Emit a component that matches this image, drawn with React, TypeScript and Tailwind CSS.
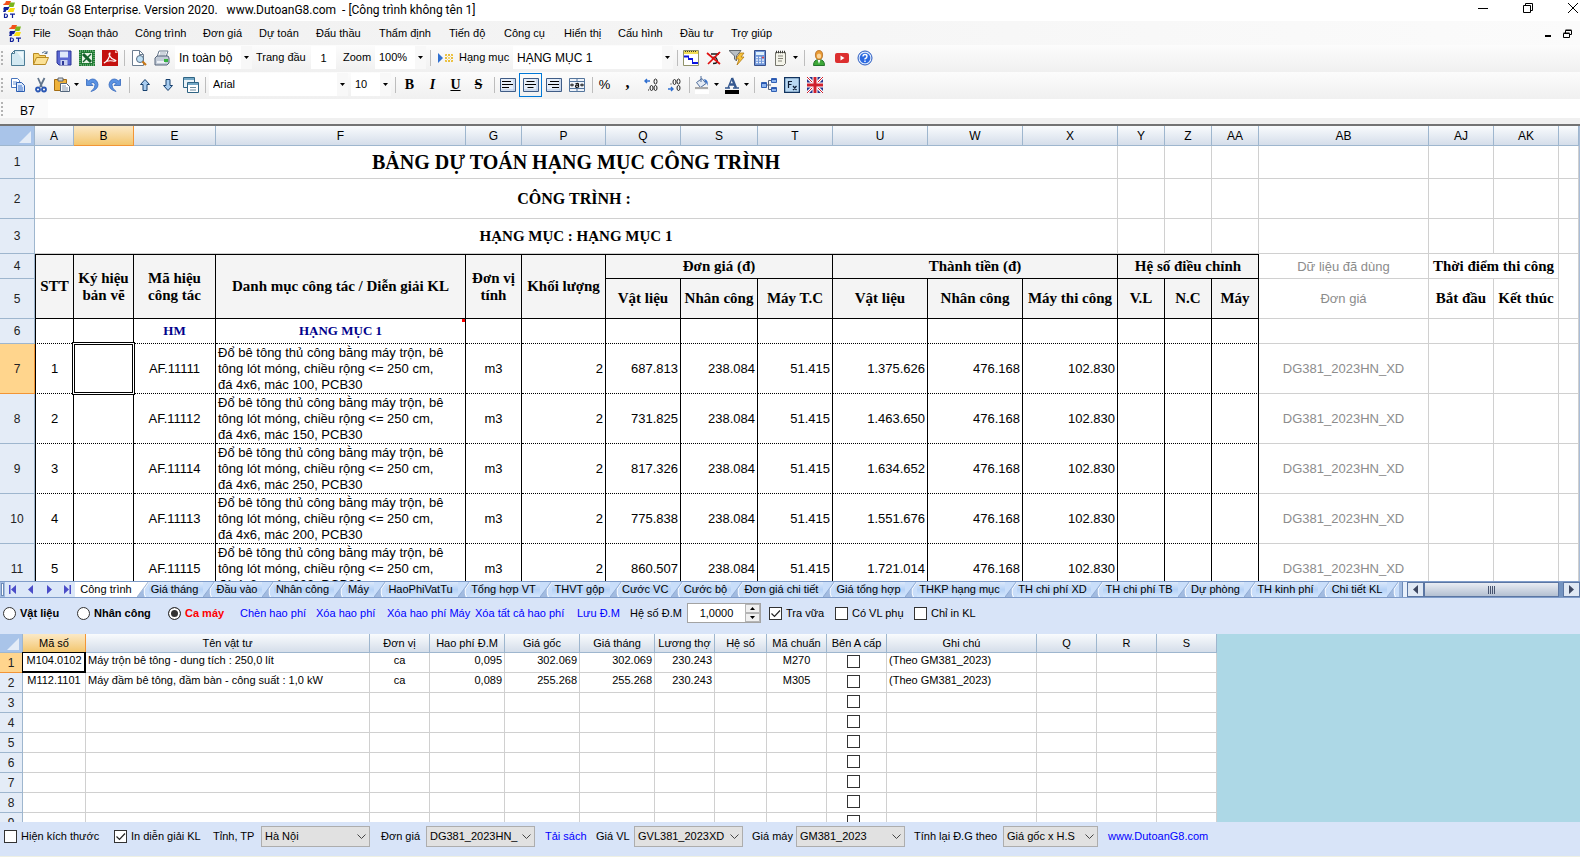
import React from 'react';

const UI = "font-['Liberation_Sans',Arial,sans-serif]";
const SERIF = "font-['Liberation_Serif','Times_New_Roman',serif]";

/* ---------- icons ---------- */

type IconProps = { children: React.ReactNode; size?: string; box?: string };
const Svg = ({ children, size = 'size-4', box = '0 0 16 16' }: IconProps) => (
  <svg viewBox={box} className={`${size} shrink-0`} aria-hidden="true">
    {children}
  </svg>
);

const Logo = () => (
  <Svg box="0 0 14 17" size="w-[14px] h-[17px]">
    <path d="M4 0h5L7.500 4H1l1-1.500h1z" fill="#f4511a" />
    <path d="M8 1.500h5L11.500 6H6.500z" fill="#7ab51d" />
    <path d="M2 6h5.500L6 9H4.500L3.500 11H1l1-2.500h-1z" fill="#10209a" />
    <path d="M8 7h5l-1.500 4h-6z" fill="#fbdf10" />
    <path d="M2.500 13v3.500h1.200q1.800 0 1.800-1.700T3.700 13zM8 13.200h5M10.500 13v4" fill="none" stroke="#10209a" strokeWidth="1.200" />
  </Svg>
);
const NewIcon = () => (
  <Svg>
    <path d="M4.500.500h10v15h-13v-12z" fill="#d3e9f2" stroke="#4d7d96" />
    <path d="M4.500.500v3h-3z" fill="#fff" stroke="#4d7d96" />
    <path d="M7 2h6v8z" fill="#eef8fc" />
  </Svg>
);
const OpenIcon = () => (
  <Svg>
    <path d="M.500 14.500v-11h5l1 2h6v3" fill="#f6d36b" stroke="#b88a22" />
    <path d="M.500 14.500l3-7h12l-3 7z" fill="#fbe196" stroke="#b88a22" />
    <path d="M9 3q3-3 5 0m0-2v2.500h-2.500" fill="none" stroke="#55708c" />
  </Svg>
);
const SaveIcon = () => (
  <Svg>
    <path d="M1 1h14v14H3l-2-2z" fill="#5a67d2" stroke="#2d3796" />
    <path d="M4 1.500h8v6H4z" fill="#dfe8fb" />
    <path d="M4.500 10h7v5h-7z" fill="#c9d2f0" />
    <path d="M6 11h2v4H6z" fill="#2d3796" />
  </Svg>
);
const ExcelIcon = () => (
  <Svg>
    <path d="M0 0h16v16H0z" fill="#1f7a33" />
    <path d="M1 1h14v14H1z" fill="none" stroke="#9fd2a4" strokeDasharray="1 1" />
    <path d="M3 3h10v10H3z" fill="#e8f4e6" />
    <path d="M4 4l8 8" stroke="#14602a" strokeWidth="3" />
    <path d="M12 4l-8 8" stroke="#14602a" strokeWidth="1.500" />
  </Svg>
);
const PdfIcon = () => (
  <Svg>
    <path d="M0 0h14l2 2v14H0z" fill="#c4120f" />
    <path d="M13 0l3 3h-3z" fill="#f7b4ae" />
    <path d="M2 13c3-1 6-6 6-10-2 0-1 5 5 7 2 .500 0 1.500-2 1-3-.500-7 0-9 2z" fill="none" stroke="#fff" strokeWidth="1.200" />
  </Svg>
);
const PreviewIcon = () => (
  <Svg>
    <path d="M1.500.500h7l4 4v11h-11z" fill="#fff" stroke="#6c7d90" />
    <path d="M8.500.500v4h4" fill="none" stroke="#6c7d90" />
    <circle cx="9" cy="9" r="3.500" fill="#bfe0f5" stroke="#566a80" />
    <path d="M11.500 11.500l3.500 3.500" stroke="#c87818" strokeWidth="2.200" />
  </Svg>
);
const PrintIcon = () => (
  <Svg>
    <path d="M5 1h9l-2 6H3z" fill="#fff" stroke="#67788c" />
    <path d="M6 3h6M5.500 5h6" stroke="#9cabbb" />
    <path d="M1 8l2-2h11l1 2v5l-2 2H1z" fill="#c3ccd8" stroke="#56657a" />
    <path d="M3 11h8v2H3z" fill="#eef2f7" />
    <path d="M10 9h4v3h-4z" fill="#35b13f" />
  </Svg>
);
const InsertItemIcon = () => (
  <Svg>
    <path d="M1 3v10l5-5z" fill="#2f6fd0" />
    <path d="M8 4h2v2H8zM11 4h2v2h-2zM14 4h2v2h-2zM8 7h2v2H8zM14 7h2v2h-2zM8 10h2v2H8zM11 10h2v2h-2zM14 10h2v2h-2z" fill="#e9bd3a" />
    <path d="M11 7h2v2h-2z" fill="#fbe79a" />
    <path d="M8 4l8 8M16 4l-8 8" stroke="#f0cf62" strokeWidth=".700" />
  </Svg>
);
const GanttIcon = () => (
  <Svg>
    <path d="M.500.500h15v15H.500z" fill="#fff" stroke="#90926a" />
    <path d="M1 1h14v3H1z" fill="#f2dd55" />
    <path d="M2 1.500h12" stroke="#3c3c28" strokeDasharray="1 1" />
    <path d="M1 6.500h5M5 9h5M9 13h6" stroke="#0a14e0" strokeWidth="2" />
    <path d="M5.500 6v3M9.500 9v4" stroke="#0a14e0" />
  </Svg>
);
const DeleteIcon = () => (
  <Svg>
    <path d="M5 4h8M6 8.500q3-3 5 1t-4 4M10 5l3-2" stroke="#1a1a1a" strokeWidth="1.300" fill="none" />
    <path d="M1 3l13 11M14 2L2 14" stroke="#e01010" strokeWidth="1.700" />
  </Svg>
);
const FilterIcon = () => (
  <Svg>
    <path d="M0 .500h12L7.500 6v5l-2-2V6z" fill="#b9bfc5" stroke="#62686e" />
    <path d="M11 3h4l-3 4h3l-7 8 2-6H7z" fill="#f8c43a" stroke="#b07814" strokeWidth=".800" />
  </Svg>
);
const CalcIcon = () => (
  <Svg>
    <path d="M2.500.500h11v15h-11z" fill="#6f96d8" stroke="#37508c" />
    <path d="M4 2h8v3H4z" fill="#dff0fb" />
    <path d="M4 7.500h8M4 10h8M4 12.500h8" stroke="#e7effc" strokeWidth="1.500" strokeDasharray="2 1" />
    <path d="M10 7.500h2" stroke="#e04040" strokeWidth="1.500" />
  </Svg>
);
const NoteIcon = () => (
  <Svg>
    <path d="M2.500 2.500h10v11l-2 2h-8z" fill="#f4f4ea" stroke="#75756c" />
    <path d="M3 2h10" stroke="#3a3a36" strokeWidth="2.500" strokeDasharray="1 1" />
    <path d="M5 6h5M5 8.500h5M5 11h4" stroke="#85857a" />
  </Svg>
);
const UserIcon = () => (
  <Svg>
    <path d="M2.500 15.500q0-6 5.500-6t5.500 6z" fill="#3da838" stroke="#23742a" />
    <path d="M6.500 9.500h3L8 14z" fill="#fff" />
    <ellipse cx="8" cy="5" rx="3.600" ry="4.500" fill="#e99a34" stroke="#a8621a" strokeWidth=".700" />
    <ellipse cx="8" cy="6" rx="2.200" ry="2.600" fill="#fbd59a" />
  </Svg>
);
const VideoIcon = () => (
  <Svg>
    <rect x="1" y="3" width="14" height="10" rx="2" fill="#dc2f2f" />
    <path d="M6.500 5.500v5l4-2.500z" fill="#fff" />
  </Svg>
);
const HelpIcon = () => (
  <Svg>
    <circle cx="8" cy="8" r="7" fill="#dbe9fd" stroke="#2a5ac0" />
    <circle cx="8" cy="8" r="5.300" fill="#2d6ae0" />
    <path d="M6 6.500q0-2 2-2t2 1.700-2 2.600v.700M8 10.500V12" stroke="#fff" strokeWidth="1.400" fill="none" />
  </Svg>
);
const CopyIcon = () => (
  <Svg>
    <path d="M1.500 1.500h6l2 2v7h-8z" fill="#fff" stroke="#4775bd" />
    <path d="M3 5h4M3 7h4" stroke="#6d96d6" />
    <path d="M6.500 5.500h5l3 3v6h-8z" fill="#dce9fb" stroke="#2a5cb0" />
    <path d="M8 9h4M8 11h5M8 13h5" stroke="#3d73cc" />
  </Svg>
);
const CutIcon = () => (
  <Svg>
    <path d="M5 1l4 9M11.500 1L7 10" stroke="#62758c" strokeWidth="1.800" />
    <circle cx="5" cy="12.500" r="2" fill="none" stroke="#2a57b4" strokeWidth="1.800" />
    <circle cx="11" cy="12.500" r="2" fill="none" stroke="#2a57b4" strokeWidth="1.800" />
  </Svg>
);
const PasteIcon = () => (
  <Svg>
    <path d="M.500 2.500h12v11H.500z" fill="#efb33b" stroke="#a46d14" />
    <path d="M4 1h5v3H4z" fill="#d7dbe0" stroke="#5e6670" />
    <path d="M6.500 6.500h6l3 3v5h-9z" fill="#fff" stroke="#53667c" />
    <path d="M8 9h4M8 11h6M8 13h6" stroke="#8a9bb0" />
  </Svg>
);
const UndoIcon = ({ flip = false }: { flip?: boolean }) => (
  <Svg>
    <g transform={flip ? undefined : 'translate(16 0) scale(-1 1)'}>
      <path d="M13.500 2v6.500H7l2.200-2.200Q6 4.500 5 7.500q-.500 3.500 4 7Q2 12.500 2 7.500 3 2 7.500 2q2 0 4 2z" fill="#5a92e2" stroke="#3568bd" strokeWidth=".800" />
    </g>
  </Svg>
);
const ArrowIcon = ({ down = false }: { down?: boolean }) => (
  <Svg>
    <g transform={down ? 'translate(0 16) scale(1 -1)' : undefined}>
      <path d="M8 2.500l4.500 5H10v6H6v-6H3.500z" fill="#a9cdf0" stroke="#17406e" />
    </g>
  </Svg>
);
const SheetsIcon = () => (
  <Svg>
    <path d="M.500.500h11v10h-11z" fill="#eaf3f8" stroke="#2f6484" />
    <path d="M1 2h10" stroke="#74a8c6" strokeWidth="2" />
    <path d="M4.500 5.500h11v10h-11z" fill="#fff" stroke="#2f6484" />
    <path d="M5 7h10" stroke="#74a8c6" strokeWidth="2" />
    <path d="M7 10.500h6M7 13h6" stroke="#6b8ba0" />
  </Svg>
);
const AlignIcon = ({ d }: { d: string }) => (
  <Svg>
    <path d="M.500 1.500h15v13H.500z" fill="#e6eef9" stroke="#3f5c86" />
    <path d="M1 13h14M14 2v12" stroke="#b3c6e2" />
    <path d={d} stroke="#000" />
  </Svg>
);
const MergeIcon = () => (
  <Svg>
    <path d="M.500 1.500h15v13H.500z" fill="#eef3fa" stroke="#54759c" />
    <path d="M.500 4.500h15M.500 11.500h15M8 1.500v3M8 11.500v3" stroke="#54759c" />
    <path d="M1 8h4M11 8h4M3 6.500v3M13 6.500v3" stroke="#111" />
    <path d="M6.500 7q3-1.500 3 .500v2.500q-3 1-3-.700t3-.800" stroke="#111" fill="none" strokeWidth="1.200" />
  </Svg>
);
const DecimalIcon = ({ less = false }: { less?: boolean }) => (
  <Svg>
    <path d={less ? 'M2 12h5M5 10l2 2-2 2' : 'M2 4h5M4 2L2 4l2 2'} stroke="#2f6fd0" fill="none" strokeWidth="1.400" />
    <ellipse cx="8.500" cy={less ? 5 : 11} rx="1.500" ry="2.500" fill="none" stroke="#222" />
    <ellipse cx="12.500" cy="4.500" rx="1.500" ry="2.500" fill="none" stroke="#222" />
    <ellipse cx="12.500" cy="11" rx="1.500" ry="2.500" fill="none" stroke="#222" />
    <path d={less ? 'M4.500 7h1' : 'M5 13h1'} stroke="#222" />
  </Svg>
);
const FillIcon = () => (
  <Svg box="0 0 16 18" size="w-4 h-[18px]">
    <path d="M2.500 6.500l5.500-4 4 5-5.500 4z" fill="#e4ebf5" stroke="#4f6d9b" />
    <path d="M7 0v6" stroke="#4f6d9b" />
    <path d="M10 3q5 1 3.500 7-1-4-2.500-4z" fill="#3a72c8" />
    <path d="M1 12h13" stroke="#a9a9a9" strokeWidth="2" />
    <path d="M1 14h14v4H1z" fill="#fff" />
  </Svg>
);
const FontColorIcon = () => (
  <Svg box="0 0 16 18" size="w-4 h-[18px]">
    <path d="M1 12h5M9 12h6M4 12L8 2" stroke="#35588f" strokeWidth="1.400" fill="none" />
    <path d="M8 2l4 10M5.500 8.500H11" stroke="#35588f" strokeWidth="2.400" fill="none" />
    <path d="M1 14h14v4H1z" fill="#000" />
  </Svg>
);
const TreeIcon = () => (
  <Svg>
    <path d="M5 8h5M7.500 3.500v9H11M7.500 3.500H11" stroke="#555f78" fill="none" />
    <path d="M.500 5.500h5v5h-5zM10.500 1.500h5v4h-5zM10.500 10.500h5v4h-5z" fill="#8db4ee" stroke="#3060b4" />
    <path d="M1 6.500h4M11 2.500h4M11 11.500h4" stroke="#2b56b0" />
  </Svg>
);
const FxIcon = () => (
  <Svg>
    <path d="M.500.500h15v15H.500z" fill="#b8d8f2" stroke="#12345f" strokeWidth="1.500" />
    <path d="M4.500 11V4.500H8M4.500 7.500H7.500M9 9l3.500 4M12.500 9L9 13" stroke="#0c1c34" strokeWidth="1.200" fill="none" />
  </Svg>
);
const FlagIcon = () => (
  <Svg>
    <path d="M0 0h16v16H0z" fill="#26358c" />
    <path d="M0 0l16 16M16 0L0 16" stroke="#fff" strokeWidth="3" />
    <path d="M0 0l16 16M16 0L0 16" stroke="#d0202c" strokeWidth="1" />
    <path d="M8 0v16M0 8h16" stroke="#fff" strokeWidth="5" />
    <path d="M8 0v16M0 8h16" stroke="#d0202c" strokeWidth="3" />
  </Svg>
);
const Caret = () => (
  <Svg box="0 0 5 3" size="w-[5px] h-[3px]">
    <path d="M0 0h5L2.500 3z" fill="#000" />
  </Svg>
);

/* ---------- toolbar parts ---------- */

const Tool = ({ label, children, w = 'w-[23px]' }: { label: string; children: React.ReactNode; w?: string }) => (
  <button type="button" aria-label={label} className={`flex h-6 ${w} shrink-0 items-center justify-center gap-1`}>
    {children}
  </button>
);
const Sep = ({ m = 'mx-1' }: { m?: string }) => <span className={`h-4 w-px shrink-0 bg-[#bdbdbd] ${m}`} />;
const Grip = () => (
  <span className="flex w-[5px] shrink-0 flex-col gap-[2px]">
    {[0, 1, 2, 3].map((i) => (
      <span key={i} className="size-[2px] bg-[#b4b4b4]" />
    ))}
  </span>
);
const Combo = ({ label, value, w, text = 'text-[11px]' }: { label: string; value: string; w: string; text?: string }) => (
  <span className={`relative flex h-[23px] shrink-0 items-center bg-white ${w}`}>
    <select aria-label={label} className={`h-full w-full appearance-none bg-transparent pl-1 outline-none ${text}`}>
      <option>{value}</option>
    </select>
    <span className="pointer-events-none absolute inset-y-0 right-0 flex w-[11px] items-center justify-center bg-[#f8f8f8]">
      <Caret />
    </span>
  </span>
);

const MENU: [string, string][] = [
  ['File', 'w-[35px]'],
  ['Soạn thảo', 'w-[67px]'],
  ['Công trình', 'w-[68px]'],
  ['Đơn giá', 'w-14'],
  ['Dự toán', 'w-[57px]'],
  ['Đấu thầu', 'w-[63px]'],
  ['Thẩm định', 'w-[70px]'],
  ['Tiến độ', 'w-[55px]'],
  ['Công cụ', 'w-[60px]'],
  ['Hiển thị', 'w-[54px]'],
  ['Cấu hình', 'w-[62px]'],
  ['Đầu tư', 'w-[51px]'],
  ['Trợ giúp', 'w-[58px]'],
];

const BAR = 'flex h-[27px] shrink-0 items-center bg-linear-to-b from-[#fcfcfc] to-[#f0f0f0] pb-[2px] pl-[1px]';

const TopBars = () => (
  <header className="shrink-0 text-[11px]">
    <div className="flex h-[21px] items-center bg-white pb-[2px] pl-[2px]">
      <Logo />
      <h1 className="ml-[5px] whitespace-pre text-[12px] font-normal font-['Roboto','Open_Sans',sans-serif]">
        {'Dự toán G8 Enterprise. Version 2020.   www.DutoanG8.com  - [Công trình không tên 1]'}
      </h1>
      <div className="ml-auto flex items-center self-start">
        <button type="button" aria-label="Thu nhỏ" className="flex h-4 w-[45px] items-center justify-center">
          <Svg box="0 0 10 10" size="size-[10px]"><path d="M0 5.500h10" stroke="#000" /></Svg>
        </button>
        <button type="button" aria-label="Khôi phục" className="flex h-4 w-[45px] items-center justify-center">
          <Svg box="0 0 10 10" size="size-[10px]"><path d="M.500 2.500h7v7h-7zM2.500 2.500v-2h7v7h-2" stroke="#000" fill="none" /></Svg>
        </button>
        <button type="button" aria-label="Đóng" className="flex h-4 w-[30px] items-center justify-end pr-[2px]">
          <Svg box="0 0 10 10" size="size-[10px]"><path d="M0 0l10 10M10 0L0 10" stroke="#000" /></Svg>
        </button>
      </div>
    </div>

    <nav className="flex h-6 items-center bg-linear-to-r from-[#f0f0f0] to-[#fbfbfb] pl-2">
      <Logo />
      <div className="ml-[11px] flex">
        {MENU.map(([name, w]) => (
          <button key={name} type="button" className={`${w} text-left whitespace-nowrap`}>
            {name}
          </button>
        ))}
      </div>
      <div className="ml-auto flex items-center gap-3 pr-2">
        <button type="button" aria-label="Thu nhỏ cửa sổ con" className="flex h-3 items-end">
          <Svg box="0 0 6 4" size="w-[6px] h-1"><path d="M0 1h6" stroke="#000" strokeWidth="2" /></Svg>
        </button>
        <button type="button" aria-label="Khôi phục cửa sổ con">
          <Svg box="0 0 9 9" size="size-[9px]"><path d="M.500 4.500h6v4h-6zM2.500 4V1.500h6v4H7M.500 4h6M2.500 1h6" stroke="#000" fill="none" /></Svg>
        </button>
      </div>
    </nav>

    <div className={BAR}>
      <Grip />
      <Tool label="Tạo mới"><NewIcon /></Tool>
      <Tool label="Mở"><OpenIcon /></Tool>
      <Tool label="Lưu"><SaveIcon /></Tool>
      <Tool label="Xuất Excel"><ExcelIcon /></Tool>
      <Tool label="Xuất PDF"><PdfIcon /></Tool>
      <Sep m="mr-[2px] ml-[3px]" />
      <Tool label="Xem trước"><PreviewIcon /></Tool>
      <Tool label="In"><PrintIcon /></Tool>
      <span className="w-[2px]" />
      <Combo label="Phạm vi in" value="In toàn bộ" w="w-[77px]" text="text-xs" />
      <label htmlFor="first-page" className="ml-1 w-[55px] whitespace-nowrap">Trang đầu</label>
      <input id="first-page" defaultValue="1" className="h-[23px] w-[25px] bg-white text-center outline-none" />
      <span className="ml-[7px] w-8 whitespace-nowrap">Zoom</span>
      <Combo label="Zoom" value="100%" w="w-[51px]" />
      <Sep m="mr-[2px] ml-1" />
      <Tool label="Chèn hạng mục"><InsertItemIcon /></Tool>
      <span className="ml-[3px] w-[54px] whitespace-nowrap">Hạng mục</span>
      <Combo label="Hạng mục" value="HẠNG MỤC 1" w="w-40" text="text-xs" />
      <Sep m="mr-[1px] ml-1" />
      <Tool label="Tiến độ"><GanttIcon /></Tool>
      <Tool label="Xóa"><DeleteIcon /></Tool>
      <Tool label="Lọc nhanh"><FilterIcon /></Tool>
      <Tool label="Máy tính"><CalcIcon /></Tool>
      <Tool label="Ghi chú" w="w-[29px]"><NoteIcon /><Caret /></Tool>
      <Sep m="mr-[2px] ml-1" />
      <Tool label="Tài khoản"><UserIcon /></Tool>
      <Tool label="Video"><VideoIcon /></Tool>
      <Tool label="Trợ giúp"><HelpIcon /></Tool>
    </div>

    <div className={BAR}>
      <Grip />
      <Tool label="Sao chép"><CopyIcon /></Tool>
      <Tool label="Cắt"><CutIcon /></Tool>
      <Tool label="Dán" w="w-7"><PasteIcon /><Caret /></Tool>
      <Tool label="Hoàn tác"><UndoIcon /></Tool>
      <Tool label="Làm lại"><UndoIcon flip /></Tool>
      <Sep m="mx-[3px]" />
      <Tool label="Lên"><ArrowIcon /></Tool>
      <Tool label="Xuống"><ArrowIcon down /></Tool>
      <Tool label="Nhân bản trang"><SheetsIcon /></Tool>
      <Sep m="mx-[3px]" />
      <Combo label="Phông chữ" value="Arial" w="w-[139px]" />
      <span className="w-[3px]" />
      <Combo label="Cỡ chữ" value="10" w="w-10" />
      <Sep m="mr-[2px] ml-1" />
      <button type="button" className={`w-[23px] text-sm font-bold ${SERIF}`}>B</button>
      <button type="button" className={`w-[23px] text-sm font-bold italic ${SERIF}`}>I</button>
      <button type="button" className={`w-[23px] text-sm font-bold underline ${SERIF}`}>U</button>
      <button type="button" className={`w-[23px] text-sm font-bold line-through ${SERIF}`}>S</button>
      <Sep m="mr-[1px] ml-1" />
      <Tool label="Căn trái"><AlignIcon d="M2 4.500h9M2 7.500h11M2 10.500h7" /></Tool>
      <button type="button" aria-label="Căn giữa" aria-pressed="true" className="flex h-6 w-[23px] items-center justify-center border border-[#0078d7]">
        <AlignIcon d="M3.500 4.500h8M2 7.500h11M4.500 10.500h6" />
      </button>
      <Tool label="Căn phải"><AlignIcon d="M4 4.500h9M2 7.500h11M6 10.500h7" /></Tool>
      <Tool label="Trộn ô"><MergeIcon /></Tool>
      <Sep m="ml-1" />
      <button type="button" className="w-[23px] text-[13px]">%</button>
      <button type="button" className={`w-[23px] pb-1 text-base leading-4 font-bold ${SERIF}`}>,</button>
      <Tool label="Thêm số lẻ"><DecimalIcon /></Tool>
      <Tool label="Bớt số lẻ"><DecimalIcon less /></Tool>
      <Sep m="mr-[2px] ml-1" />
      <Tool label="Màu nền" w="w-[29px]"><FillIcon /><Caret /></Tool>
      <Tool label="Màu chữ" w="w-[30px]"><FontColorIcon /><Caret /></Tool>
      <Sep m="mr-[2px] ml-[3px]" />
      <Tool label="Sơ đồ"><TreeIcon /></Tool>
      <Tool label="Hàm"><FxIcon /></Tool>
      <Tool label="Tiếng Anh"><FlagIcon /></Tool>
    </div>

    <div className="flex h-[19px] items-center bg-[#fafafa] pl-[1px]">
      <Grip />
      <span className="w-[42px] pt-1 pl-[14px] text-xs">B7</span>
      <input aria-label="Nội dung ô" className="h-full min-w-0 flex-1 bg-white outline-none" />
    </div>
    <div className="h-[8px] border-b-2 border-[#737373] bg-[#f0f0f0]" />
  </header>
);

/* ---------- estimate sheet ---------- */

const COLS: [string, string][] = [
  ['A', 'w-[39px]'],
  ['B', 'w-[60px]'],
  ['E', 'w-[82px]'],
  ['F', 'w-[250px]'],
  ['G', 'w-[56px]'],
  ['P', 'w-[84px]'],
  ['Q', 'w-[75px]'],
  ['S', 'w-[77px]'],
  ['T', 'w-[75px]'],
  ['U', 'w-[95px]'],
  ['W', 'w-[95px]'],
  ['X', 'w-[95px]'],
  ['Y', 'w-[47px]'],
  ['Z', 'w-[47px]'],
  ['AA', 'w-[47px]'],
  ['AB', 'w-[170px]'],
  ['AJ', 'w-[65px]'],
  ['AK', 'w-[65px]'],
];

const ROWS = [
  { n: 7, code: 'AF.11111', mark: '100', unit: '687.813', total: '1.375.626' },
  { n: 8, code: 'AF.11112', mark: '150', unit: '731.825', total: '1.463.650' },
  { n: 9, code: 'AF.11114', mark: '250', unit: '817.326', total: '1.634.652' },
  { n: 10, code: 'AF.11113', mark: '200', unit: '775.838', total: '1.551.676' },
  { n: 11, code: 'AF.11115', mark: '300', unit: '860.507', total: '1.721.014' },
];

const HEAD = 'border-r border-b border-[#9eb6ce] bg-linear-to-b from-[#f9fbfd] to-[#d5deea] font-normal text-xs';
const HEAD_ON = 'border-r border-b border-[#f29536] bg-linear-to-b from-[#fbe9c6] to-[#f3c66c] font-normal text-xs';
const ROWNUM = 'border-r border-b border-[#9eb6ce] bg-[#e4ecf7] font-normal text-xs text-[#222]';
const ROWNUM_ON = 'border-r border-b border-[#f29536] bg-[#ffd58d] font-normal text-xs text-[#222]';
const GRID = 'border-r border-b border-[#d0d0d0]';
const BOX = 'border-r border-b border-black bg-[#f4f4f4] px-0';
const CELL = 'border-r border-b border-black [border-bottom-style:dotted] p-0';
const HEADFONT = `${SERIF} text-[15px] leading-[17px] font-bold whitespace-nowrap`;

const Corner = () => (
  <th className="border-r border-b border-[#9eb6ce] bg-[#a9c4e9] p-0 align-bottom">
    <Svg box="0 0 12 12" size="size-3 ml-auto mr-[3px] mb-[2px]"><path d="M12 0v12H0z" fill="#e4ecf7" /></Svg>
  </th>
);

const Sheet = () => (
  <div className="min-h-0 flex-1 overflow-hidden border-r border-[#a9bcd6] bg-white">
    <table className="w-full table-fixed border-separate border-spacing-0 text-[13px] leading-4">
      <colgroup>
        <col className="w-[35px]" />
        {COLS.map(([c, w]) => (
          <col key={c} className={w} />
        ))}
        <col />
      </colgroup>
      <thead>
        <tr className="h-5">
          <Corner />
          {COLS.map(([c]) => (
            <th key={c} className={`p-0 pt-[1px] ${c === 'B' ? HEAD_ON : HEAD}`}>{c}</th>
          ))}
          <th className={`p-0 ${HEAD}`} />
        </tr>
      </thead>
      <tbody>
        {[
          { n: 1, h: 'h-[33px]', t: 'BẢNG DỰ TOÁN HẠNG MỤC CÔNG TRÌNH', s: 'text-xl leading-6' },
          { n: 2, h: 'h-10', t: 'CÔNG TRÌNH : ', s: 'text-base leading-5 whitespace-pre' },
          { n: 3, h: 'h-[35px]', t: 'HẠNG MỤC : HẠNG MỤC 1', s: 'text-[15px] leading-5' },
        ].map((r) => (
          <tr key={r.n} className={r.h}>
            <th className={`p-0 ${ROWNUM}`}>{r.n}</th>
            <td colSpan={12} className={`p-0 text-center font-bold ${GRID} ${SERIF} ${r.s}`}>{r.t}</td>
            {[0, 1, 2, 3, 4, 5, 6].map((i) => (
              <td key={i} className={`p-0 ${GRID}`} />
            ))}
          </tr>
        ))}
        <tr className={`h-[25px] text-center ${HEADFONT}`}>
          <th className={`p-0 font-['Liberation_Sans'] ${ROWNUM}`}>4</th>
          <td rowSpan={2} className={`border-t border-l ${BOX}`}>STT</td>
          <td rowSpan={2} className={`border-t ${BOX}`}>Ký hiệu<br />bản vẽ</td>
          <td rowSpan={2} className={`border-t ${BOX}`}>Mã hiệu<br />công tác</td>
          <td rowSpan={2} className={`border-t ${BOX}`}>Danh mục công tác / Diễn giải KL</td>
          <td rowSpan={2} className={`border-t ${BOX}`}>Đơn vị<br />tính</td>
          <td rowSpan={2} className={`border-t ${BOX}`}>Khối lượng</td>
          <td colSpan={3} className={`border-t ${BOX}`}>Đơn giá (đ)</td>
          <td colSpan={3} className={`border-t ${BOX}`}>Thành tiền (đ)</td>
          <td colSpan={3} className={`border-t ${BOX}`}>Hệ số điều chỉnh</td>
          <td className={`p-0 text-[13px] font-normal text-[#8c8c8c] ${UI} ${GRID}`}>Dữ liệu đã dùng</td>
          <td colSpan={2} className={`p-0 ${GRID}`}>Thời điểm thi công</td>
          <td rowSpan={2} className={`p-0 ${GRID}`} />
        </tr>
        <tr className={`h-10 text-center ${HEADFONT}`}>
          <th className={`p-0 font-['Liberation_Sans'] ${ROWNUM}`}>5</th>
          {['Vật liệu', 'Nhân công', 'Máy T.C', 'Vật liệu', 'Nhân công', 'Máy thi công', 'V.L', 'N.C', 'Máy'].map((t, i) => (
            <td key={i} className={BOX}>{t}</td>
          ))}
          <td className={`p-0 text-[13px] font-normal text-[#8c8c8c] ${UI} ${GRID}`}>Đơn giá</td>
          <td className={`p-0 ${GRID}`}>Bắt đầu</td>
          <td className={`p-0 ${GRID}`}>Kết thúc</td>
        </tr>
        <tr className={`h-[25px] text-center text-[13px] font-bold text-[#00008b] ${SERIF}`}>
          <th className={`p-0 font-['Liberation_Sans'] ${ROWNUM}`}>6</th>
          <td className={`border-l ${CELL}`} />
          <td className={CELL} />
          <td className={CELL}>HM</td>
          <td className={`relative ${CELL}`}>
            HẠNG MỤC 1
            <span className="absolute top-0 right-0 size-[3px] bg-[#f00]" />
          </td>
          {[0, 1, 2, 3, 4, 5, 6, 7, 8, 9, 10].map((i) => (
            <td key={i} className={CELL} />
          ))}
          {[0, 1, 2, 3].map((i) => (
            <td key={i} className={`p-0 ${GRID}`} />
          ))}
        </tr>
        {ROWS.map((r, i) => (
          <tr key={r.n} className="h-[50px]">
            <th className={`p-0 ${i === 0 ? ROWNUM_ON : ROWNUM}`}>{r.n}</th>
            <td className={`border-l text-center ${CELL}`}>{i + 1}</td>
            <td className={`relative ${CELL}`}>
              {i === 0 && (
                <span className="absolute -inset-[2px] border border-black shadow-[inset_0_0_0_1px_white,inset_0_0_0_2px_black]" />
              )}
            </td>
            <td className={`text-center ${CELL}`}>{r.code}</td>
            <td className={CELL}>
              <div className="pl-[2px] whitespace-nowrap">
                Đổ bê tông thủ công bằng máy trộn, bê
                <br />
                tông lót móng, chiều rộng &lt;= 250 cm,
                <br />
                đá 4x6, mác {r.mark}, PCB30
              </div>
            </td>
            <td className={`text-center ${CELL}`}>m3</td>
            {['2', r.unit, '238.084', '51.415', r.total, '476.168', '102.830'].map((v, k) => (
              <td key={k} className={`text-right ${CELL}`}>
                <span className="pr-[2px]">{v}</span>
              </td>
            ))}
            <td className={CELL} />
            <td className={CELL} />
            <td className={CELL} />
            <td className={`p-0 text-center text-[#8c8c8c] ${GRID}`}>DG381_2023HN_XD</td>
            <td className={`p-0 ${GRID}`} />
            <td className={`p-0 ${GRID}`} />
            <td className={`p-0 ${GRID}`} />
          </tr>
        ))}
      </tbody>
    </table>
  </div>
);

/* ---------- sheet tabs ---------- */

const TABS: [string, string][] = [
  ['Giá tháng', 'w-[66px]'],
  ['Đầu vào', 'w-[59px]'],
  ['Nhân công', 'w-[72px]'],
  ['Máy', 'w-10'],
  ['HaoPhiVatTu', 'w-[84px]'],
  ['Tổng hợp VT', 'w-[82px]'],
  ['THVT gộp', 'w-[70px]'],
  ['Cước VC', 'w-[61px]'],
  ['Cước bộ', 'w-[60px]'],
  ['Đơn giá chi tiết', 'w-[92px]'],
  ['Giá tổng hợp', 'w-[82px]'],
  ['THKP hạng mục', 'w-[100px]'],
  ['TH chi phí XD', 'w-[86px]'],
  ['TH chi phí TB', 'w-[87px]'],
  ['Dự phòng', 'w-[66px]'],
  ['TH kinh phí', 'w-[74px]'],
  ['Chi tiết KL', 'w-[69px]'],
];

const Slash = ({ first = false }: { first?: boolean }) => (
  <svg viewBox="0 0 14 15" className="h-full w-[12px] shrink-0" preserveAspectRatio="none" aria-hidden="true">
    <path d="M0 0h14v15H0z" fill="#a2bbe0" />
    <path d="M0 0h14L0 15z" fill={first ? '#fff' : '#c9defa'} />
    <path d="M14 0L8.500 7v8H14z" fill="#c9defa" />
    <path d="M14 0L8.500 7v5l1.500 3" stroke="#fff" fill="none" />
    <path d="M13 0L0 15" stroke="#7f9cc9" strokeWidth=".800" />
  </svg>
);
const TABBG = 'bg-linear-to-b from-[#dce9fb] via-[#b6d2f6] to-[#d3e6fd]';

const TabBar = () => (
  <div className="flex h-[17px] shrink-0 items-stretch overflow-hidden border-y border-[#7f9cc9] bg-[#a2bbe0] text-[11px] leading-[15px]">
    <span className="m-[1px] w-[3px] border border-[#6d8bb8] bg-white" />
    <div className="flex w-[70px] shrink-0 items-center justify-between bg-[#dbe7f8] px-1">
      {[
        ['Trang đầu', 'M0 0h1.500v9H0zM7 0v9L2 4.500z'],
        ['Trang trước', 'M6 0v9L1 4.500z'],
        ['Trang sau', 'M1 0v9l5-4.500z'],
        ['Trang cuối', 'M5.500 0H7v9H5.500zM0 0v9l5-4.500z'],
      ].map(([label, d]) => (
        <button key={label} type="button" aria-label={label}>
          <Svg box="0 0 7 9" size="w-[7px] h-[9px]"><path d={d} fill="#4a4cc8" /></Svg>
        </button>
      ))}
    </div>
    <button type="button" className="w-[62px] shrink-0 bg-white text-center whitespace-nowrap">Công trình</button>
    {TABS.map(([name, w], i) => (
      <button key={name} type="button" className={`flex shrink-0 ${w} ${TABBG}`}>
        <Slash first={i === 0} />
        <span className="flex-1 pr-[3px] text-center whitespace-nowrap">{name}</span>
      </button>
    ))}
    <Slash />
    <span className="ml-[3px] w-[5px] shrink-0 border-l border-[#6d8bb8] bg-[#e8f0fb]" />
    <div className="flex min-w-0 flex-1 bg-[#7393c0]">
      <button type="button" aria-label="Cuộn trái" className="flex w-[17px] items-center justify-center border border-[#5b76a3] bg-[#dfe8f4]">
        <Svg box="0 0 5 9" size="w-[5px] h-[9px]"><path d="M5 0v9L0 4.500z" fill="#3c4660" /></Svg>
      </button>
      <div className="mr-1 flex flex-1 items-center justify-center gap-[1px] border border-[#5b76a3] bg-linear-to-b from-[#e9edf3] to-[#b4c0d2]">
        {[0, 1, 2, 3].map((i) => (
          <span key={i} className="h-2 w-px bg-[#46536f]" />
        ))}
      </div>
      <button type="button" aria-label="Cuộn phải" className="flex w-[17px] items-center justify-center border border-[#5b76a3] bg-[#dfe8f4]">
        <Svg box="0 0 5 9" size="w-[5px] h-[9px]"><path d="M0 0v9l5-4.500z" fill="#3c4660" /></Svg>
      </button>
    </div>
  </div>
);

/* ---------- resource panel ---------- */

const Check = ({ id, label, on = false, w = '' }: { id: string; label: string; on?: boolean; w?: string }) => (
  <span className={`flex shrink-0 items-center ${w}`}>
    <span className="relative flex size-[13px]">
      <input id={id} type="checkbox" defaultChecked={on} className="peer size-[13px] appearance-none border border-[#333] bg-white" />
      <svg viewBox="0 0 13 13" className="pointer-events-none absolute inset-0 hidden size-[13px] peer-checked:block" aria-hidden="true">
        <path d="M2.500 6.500l3 3L11 3.500" stroke="#222" fill="none" strokeWidth="1.200" />
      </svg>
    </span>
    <label htmlFor={id} className="ml-1 whitespace-nowrap">{label}</label>
  </span>
);

const Radio = ({ id, label, on = false, w, red = false }: { id: string; label: string; on?: boolean; w: string; red?: boolean }) => (
  <span className={`flex shrink-0 items-center ${w}`}>
    <input
      id={id}
      type="radio"
      name="kind"
      defaultChecked={on}
      className="size-[13px] appearance-none rounded-full border border-[#333] bg-white checked:bg-[#333] checked:shadow-[inset_0_0_0_2px_white]"
    />
    <label htmlFor={id} className={`ml-1 font-bold whitespace-nowrap ${red ? 'text-[#f00]' : ''}`}>{label}</label>
  </span>
);

const LinkText = ({ children, w }: { children: string; w: string }) => (
  <a href="#" className={`shrink-0 whitespace-nowrap text-[#00f] ${w}`}>{children}</a>
);

const ControlBar = () => (
  <div className="flex h-9 shrink-0 items-start bg-[#d8e4f8] pt-1 pl-[3px] text-[11px]">
    <div className="flex h-[22px] items-center">
      <Radio id="k1" label="Vật liệu" w="w-[74px]" />
      <Radio id="k2" label="Nhân công" w="w-[91px]" />
      <Radio id="k3" label="Ca máy" w="w-[72px]" on red />
      <LinkText w="w-[76px]">Chèn hao phí</LinkText>
      <LinkText w="w-[71px]">Xóa hao phí</LinkText>
      <LinkText w="w-[88px]">Xóa hao phí Máy</LinkText>
      <LinkText w="w-[102px]">Xóa tất cả hao phí</LinkText>
      <LinkText w="w-[53px]">Lưu Đ.M</LinkText>
      <label htmlFor="factor" className="w-[57px] whitespace-nowrap">Hệ số Đ.M</label>
      <span className="mr-2 flex h-5 w-[74px] border border-[#a3a3a3] bg-white">
        <input id="factor" defaultValue="1,0000" className="min-w-0 flex-1 bg-white text-center outline-none" />
        <span className="flex w-[15px] flex-col">
          <button type="button" aria-label="Tăng" className="flex flex-1 items-center justify-center border border-[#b5b5b5] bg-[#f0f0f0]">
            <Svg box="0 0 5 3" size="w-[5px] h-[3px]"><path d="M0 3h5L2.500 0z" /></Svg>
          </button>
          <button type="button" aria-label="Giảm" className="flex flex-1 items-center justify-center border border-[#b5b5b5] bg-[#f0f0f0]">
            <Caret />
          </button>
        </span>
      </span>
      <Check id="c1" label="Tra vữa" on w="w-[66px]" />
      <Check id="c2" label="Có VL phụ" w="w-[79px]" />
      <Check id="c3" label="Chỉ in KL" />
    </div>
  </div>
);

const RCOLS: [string, string][] = [
  ['Mã số', 'w-[63px]'],
  ['Tên vật tư', 'w-[284px]'],
  ['Đơn vị', 'w-[60px]'],
  ['Hao phí Đ.M', 'w-[75px]'],
  ['Giá gốc', 'w-[75px]'],
  ['Giá tháng', 'w-[75px]'],
  ['Lương thợ', 'w-[60px]'],
  ['Hệ số', 'w-[52px]'],
  ['Mã chuẩn', 'w-[60px]'],
  ['Bên A cấp', 'w-[60px]'],
  ['Ghi chú', 'w-[150px]'],
  ['Q', 'w-[60px]'],
  ['R', 'w-[60px]'],
  ['S', 'w-[60px]'],
];
const ALIGN = ['text-center', 'pl-[2px]', 'text-center', 'text-right pr-[2px]', 'text-right pr-[2px]', 'text-right pr-[2px]', 'text-right pr-[2px]', '', 'text-center'];
const RDATA = [
  ['M104.0102', 'Máy trộn bê tông - dung tích : 250,0 lít', 'ca', '0,095', '302.069', '302.069', '230.243', '', 'M270'],
  ['M112.1101', 'Máy đầm bê tông, đầm bàn - công suất : 1,0 kW', 'ca', '0,089', '255.268', '255.268', '230.243', '', 'M305'],
];
const EMPTY = ['', '', '', '', '', '', '', '', ''];

const Resources = () => (
  <div className="h-[188px] shrink-0 overflow-hidden bg-[#add8e6]">
    <table className="w-[1217px] table-fixed border-separate border-spacing-0 bg-white text-[11px] leading-[13px]">
      <colgroup>
        <col className="w-[23px]" />
        {RCOLS.map(([c, w]) => (
          <col key={c} className={w} />
        ))}
      </colgroup>
      <thead>
        <tr className="h-[19px]">
          <Corner />
          {RCOLS.map(([c], i) => (
            <th key={c} className={`p-0 pt-[1px] leading-[13px] whitespace-nowrap text-[11px]! ${i === 0 ? HEAD_ON : HEAD}`}>{c}</th>
          ))}
        </tr>
      </thead>
      <tbody>
        {[1, 2, 3, 4, 5, 6, 7, 8, 9].map((n) => {
          const row = RDATA[n - 1] ?? EMPTY;
          return (
            <tr key={n} className="h-5">
              <th className={`p-0 ${n === 1 ? ROWNUM_ON : ROWNUM}`}>{n}</th>
              {row.map((v, k) => (
                <td key={k} className={`relative p-0 pt-[1px] align-top ${GRID}`}>
                  <div className={`whitespace-nowrap ${ALIGN[k]}`}>{v}</div>
                  {n === 1 && k === 0 && <span className="absolute -inset-px border-2 border-t border-l border-black" />}
                </td>
              ))}
              <td className={`p-0 pt-[2px] align-top ${GRID}`}>
                <input
                  type="checkbox"
                  aria-label={`Bên A cấp, dòng ${n}`}
                  className="mr-auto ml-5 block size-[13px] appearance-none border border-[#333] bg-white"
                />
              </td>
              <td className={`p-0 pt-[1px] pl-[2px] align-top ${GRID}`}>{n < 3 ? '(Theo GM381_2023)' : ''}</td>
              <td className={`p-0 ${GRID}`} />
              <td className={`p-0 ${GRID}`} />
              <td className={`p-0 ${GRID}`} />
            </tr>
          );
        })}
      </tbody>
    </table>
  </div>
);

const Drop = ({ id, value, w = 'w-[109px]' }: { id: string; value: string; w?: string }) => (
  <span className={`relative flex h-[21px] shrink-0 ${w}`}>
    <select id={id} className="w-full appearance-none border border-[#adadad] bg-[#e1e1e1] pl-[3px] outline-none">
      <option>{value}</option>
    </select>
    <svg viewBox="0 0 9 5" className="pointer-events-none absolute top-2 right-1 h-[5px] w-[9px]" aria-hidden="true">
      <path d="M.500.500l4 4 4-4" stroke="#444" fill="none" />
    </svg>
  </span>
);

const BottomBar = () => (
  <footer className="flex h-[35px] shrink-0 items-start border-b border-[#eef0e4] bg-[#d8e4f8] pt-1 pl-1 text-[11px]">
    <div className="flex h-[21px] items-center">
      <Check id="b1" label="Hiện kích thước" w="w-[110px]" />
      <Check id="b2" label="In diễn giải KL" on w="w-[99px]" />
      <label htmlFor="s1" className="w-12 whitespace-nowrap">Tỉnh, TP</label>
      <Drop id="s1" value="Hà Nội" />
      <label htmlFor="s2" className="ml-[11px] w-[45px] whitespace-nowrap">Đơn giá</label>
      <Drop id="s2" value="DG381_2023HN_" />
      <LinkText w="ml-[10px] w-[51px]">Tải sách</LinkText>
      <label htmlFor="s3" className="w-[38px] whitespace-nowrap">Giá VL</label>
      <Drop id="s3" value="GVL381_2023XD" />
      <label htmlFor="s4" className="ml-[9px] w-11 whitespace-nowrap">Giá máy</label>
      <Drop id="s4" value="GM381_2023" />
      <label htmlFor="s5" className="ml-[9px] w-[89px] whitespace-nowrap">Tính lại Đ.G theo</label>
      <Drop id="s5" value="Giá gốc x H.S" w="w-[95px]" />
      <LinkText w="ml-[10px]">www.DutoanG8.com</LinkText>
    </div>
  </footer>
);

export default function App() {
  return (
    <div className={`flex h-screen flex-col overflow-hidden bg-white text-black ${UI}`}>
      <TopBars />
      <Sheet />
      <TabBar />
      <ControlBar />
      <Resources />
      <BottomBar />
    </div>
  );
}
